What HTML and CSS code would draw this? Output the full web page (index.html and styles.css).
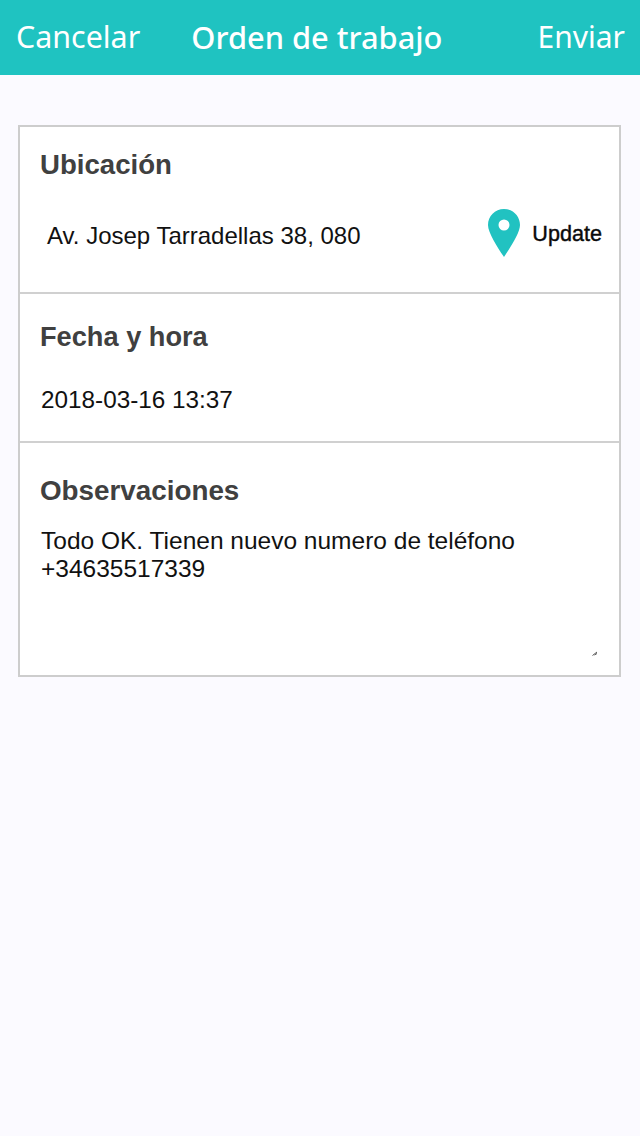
FILE: index.html
```html
<!DOCTYPE html>
<html lang="es">
<head>
<meta charset="utf-8">
<title>Orden de trabajo</title>
<link rel="stylesheet" href="styles.css">
</head>
<body>
<header class="topbar">
  <span class="top-action">Cancelar</span>
  <span class="top-title">Orden de trabajo</span>
  <span class="top-action top-send">Enviar</span>
</header>
<main class="content">
  <section class="card">
    <div class="block block-location">
      <h2 class="label">Ubicación</h2>
      <div class="location-row">
        <span class="value address">Av. Josep Tarradellas 38, 080</span>
        <div class="update">
          <svg class="pin" width="32" height="48" viewBox="0 0 32 48"><path fill="#21c2c1" fill-rule="evenodd" d="M16 0C7 0 0 7 0 16c0 8 10 23 16 32 6-9 16-24 16-32C32 7 25 0 16 0zm0 10.500a5.500 5.500 0 1 1 0 11 5.500 5.500 0 0 1 0-11z"/></svg>
          <span class="update-text">Update</span>
        </div>
      </div>
    </div>
    <div class="block block-date">
      <h2 class="label label-date">Fecha y hora</h2>
      <p class="value date">2018-03-16 13:37</p>
    </div>
    <div class="block block-notes">
      <h2 class="label label-notes">Observaciones</h2>
      <p class="value notes">Todo OK. Tienen nuevo numero de teléfono +34635517339</p>
      <svg class="resize" width="6" height="5" viewBox="0 0 6 5"><path d="M0.500 4.500 5 1M2.500 4 5 2.500" stroke="#555" stroke-width="1" fill="none"/></svg>
    </div>
  </section>
</main>
</body>
</html>
```
FILE: styles.css
```css
* { box-sizing: border-box; }
html, body { margin: 0; padding: 0; }
body {
  width: 640px;
  height: 1136px;
  background: #fbfaff;
  font-family: "Liberation Sans", Arial, sans-serif;
  overflow: hidden;
}
.topbar {
  height: 75px;
  background: #1fc3c1;
  color: #fff;
  display: flex;
  align-items: center;
  justify-content: space-between;
  padding: 0 15px 2px 16px;
  font-family: "Noto Sans", "Open Sans", sans-serif;
}
.top-action { font-size: 30.4px; }
.top-send { font-size: 30px; }
.top-title { font-size: 30.8px; font-weight: 500; margin-right: 44px; }
.content { padding: 50px 19px 0 18px; }
.card {
  width: 603px;
  height: 552px;
  background: #fff;
  border: 2px solid #cdcdcd;
  display: flex;
  flex-direction: column;
}
.block { border-bottom: 2px solid #d0d0d0; padding: 0 18px 0 20px; }
.block:last-child { border-bottom: 0; }
.block-location { height: 167px; padding-top: 22px; }
.block-date { height: 149px; padding-top: 27px; }
.block-notes { flex: 1; padding-top: 32px; display: flex; flex-direction: column; }
.label {
  margin: 0;
  font-size: 27.6px;
  line-height: 32px;
  font-weight: 700;
  color: #404040;
}
.label-date { font-size: 27.2px; }
.label-notes { font-size: 27.8px; }
.value { margin: 0; font-size: 24px; line-height: 28px; color: #111; }
.location-row {
  display: flex;
  align-items: center;
  justify-content: space-between;
  margin-top: 28px;
  padding-left: 7px;
}
.address { margin-top: 6px; }
.update { display: flex; align-items: center; gap: 12px; margin-right: -1px; }
.update-text { font-size: 21.6px; font-weight: 500; color: #0a0a0a; -webkit-text-stroke: 0.4px #0a0a0a; margin-top: 1px; }
.pin { display: block; }
.date { margin-top: 33px; padding-left: 1px; font-size: 24.3px; }
.notes { margin-top: 20px; padding-left: 1px; width: 530px; font-size: 24.5px; }
.resize { align-self: flex-end; margin-top: 68px; margin-right: 3px; }
```
